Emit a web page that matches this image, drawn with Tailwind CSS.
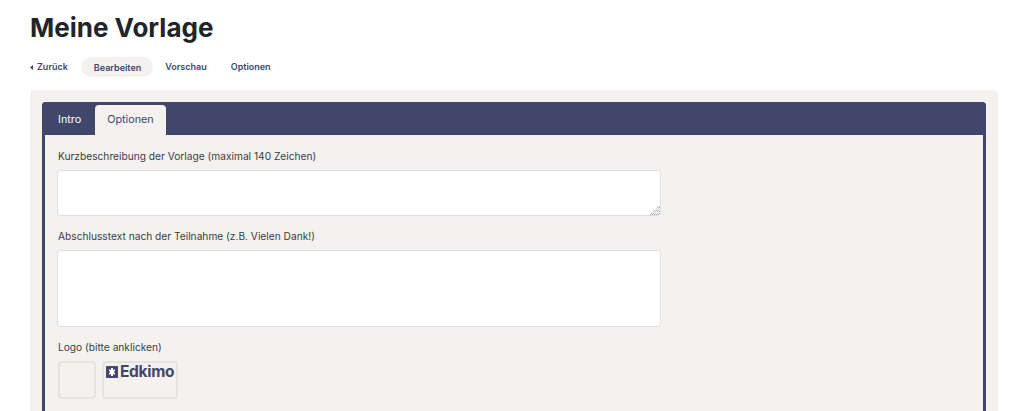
<!DOCTYPE html>
<html lang="de">
<head>
    <meta charset="UTF-8">
    <title>Meine Vorlage</title>
    <script src="https://cdn.jsdelivr.net/npm/@tailwindcss/browser@4"></script>
</head>
<body class="bg-white h-[411px] overflow-hidden font-['Inter',sans-serif] text-[#212529]">
    <div class="pl-[30px] pr-[26px]">
        <h1 class="pt-[12px] h-[57px] text-[26px] leading-[32px] font-bold text-[#212529]">Meine Vorlage</h1>

        <!-- Navigation -->
        <nav class="flex items-center h-[20px] text-[9px] leading-[22px] font-semibold text-[#41476b]">
            <a class="flex items-center gap-[4px] mr-[13px]">
                <svg width="3" height="5" viewBox="0 0 3 5"><path d="M3 0v5L0 2.500z" fill="#41476b"/></svg>
                Zurück
            </a>
            <a class="h-[20px] pl-[13px] pr-[12px] rounded-full bg-[#f4f1ee] leading-[22px]">Bearbeiten</a>
            <a class="ml-[12px]">Vorschau</a>
            <a class="ml-[24px]">Optionen</a>
        </nav>

        <!-- Panel -->
        <div class="mt-[13px] h-[321px] overflow-hidden rounded-t-[4px] bg-[#f4f1ee] px-[12px] pt-[12px]">
            <div class="h-[309px] rounded-t-[4px] border-x-[3px] border-[#41476b] bg-[#f4f1ee]">
                <div class="flex items-end h-[33px] -mx-[3px] px-[3px] bg-[#41476b] rounded-t-[4px] text-[10.8px]">
                    <a class="h-[30px] leading-[30px] pl-[13px] pr-[14px] text-white">Intro</a>
                    <a class="h-[30px] leading-[30px] px-[12px] rounded-t-[4px] bg-[#f4f1ee] text-[#41476b]">Optionen</a>
                </div>

                <div class="pl-[12px] text-[10.2px] text-[#3a3d4a]">
                    <label class="block mt-[15px] pl-[1px] h-[20px] leading-[12px]">Kurzbeschreibung der Vorlage (maximal 140 Zeichen)</label>
                    <div class="relative w-[604px] h-[46px]">
                        <textarea class="block w-full h-full bg-white border border-[#dfdfe2] rounded-[4px] resize-none"></textarea>
                        <!-- resize grip -->
                        <svg class="absolute right-[1px] bottom-[1px]" width="10" height="10" viewBox="0 0 10 10" stroke="#808080" stroke-width="1" stroke-dasharray="1 1">
                            <path d="M0 10 10 0M2 10l8-8M4 10l6-6M6 10l4-4M8 10l2-2"/>
                        </svg>
                    </div>

                    <label class="block mt-[14px] pl-[1px] h-[20px] leading-[12px]">Abschlusstext nach der Teilnahme (z.B. Vielen Dank!)</label>
                    <textarea class="block w-[604px] h-[77px] bg-white border border-[#dfdfe2] rounded-[4px] resize-none"></textarea>

                    <label class="block mt-[14px] pl-[1px] h-[20px] leading-[12px]">Logo (bitte anklicken)</label>
                    <div class="flex gap-[6px] pl-[1px]">
                        <div class="w-[38px] h-[38px] border-2 border-[#e5e3e2] rounded-[4px]"></div>
                        <div class="w-[76px] h-[38px] border-2 border-[#e5e3e2] rounded-[4px] flex items-start gap-[2px] pl-[2px] text-[#41476b]">
                            <svg class="mt-[3px]" width="12" height="12" viewBox="0 0 12 12">
                                <rect width="12" height="12" rx="1" fill="#41476b"/>
                                <path d="M5 2h2v2l1.500-.8.8 1.500L7.500 6l1.800 1.300-.8 1.500L7 8v2H5V8l-1.500.8-.8-1.500L4.500 6 2.700 4.700l.8-1.500L5 4z" fill="#fff"/>
                            </svg>
                            <span class="text-[15.500px] leading-[18px] font-bold tracking-[-0.3px]">Edkimo</span>
                        </div>
                    </div>
                </div>
            </div>
        </div>
    </div>
</body>
</html>
